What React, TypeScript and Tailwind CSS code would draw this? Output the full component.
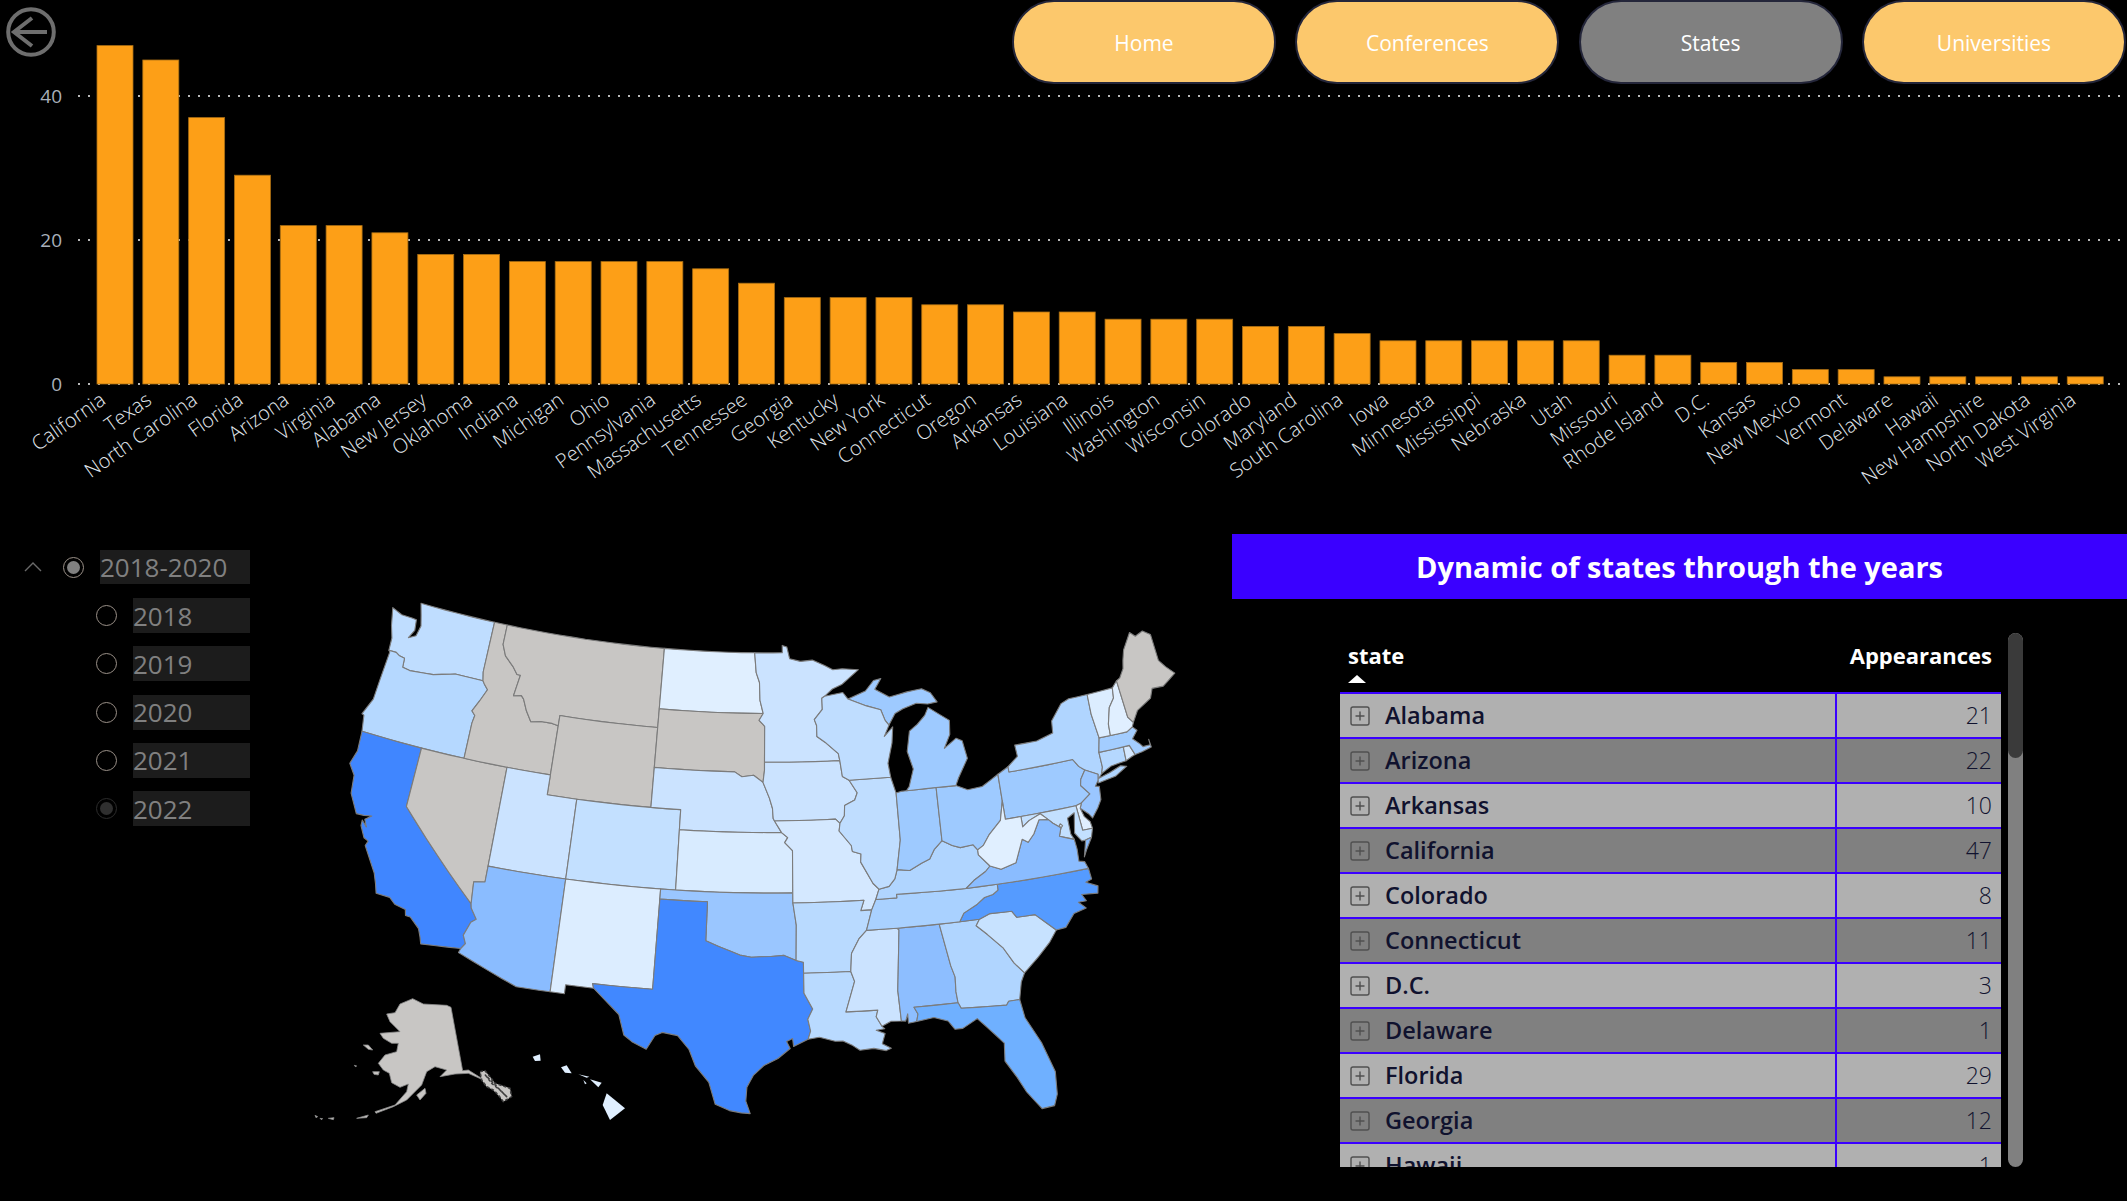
import { SquarePlus } from "lucide-react";

const barData: [string, number][] = [
  ["California", 47], ["Texas", 45], ["North Carolina", 37], ["Florida", 29], ["Arizona", 22], ["Virginia", 22],
  ["Alabama", 21], ["New Jersey", 18], ["Oklahoma", 18], ["Indiana", 17], ["Michigan", 17], ["Ohio", 17],
  ["Pennsylvania", 17], ["Massachusetts", 16], ["Tennessee", 14], ["Georgia", 12], ["Kentucky", 12], ["New York", 12],
  ["Connecticut", 11], ["Oregon", 11], ["Arkansas", 10], ["Louisiana", 10], ["Illinois", 9], ["Washington", 9],
  ["Wisconsin", 9], ["Colorado", 8], ["Maryland", 8], ["South Carolina", 7], ["Iowa", 6], ["Minnesota", 6],
  ["Mississippi", 6], ["Nebraska", 6], ["Utah", 6], ["Missouri", 4], ["Rhode Island", 4], ["D.C.", 3],
  ["Kansas", 3], ["New Mexico", 2], ["Vermont", 2], ["Delaware", 1], ["Hawaii", 1], ["New Hampshire", 1],
  ["North Dakota", 1], ["West Virginia", 1],
];

const rows: [string, number][] = [
  ["Alabama", 21], ["Arizona", 22], ["Arkansas", 10], ["California", 47], ["Colorado", 8], ["Connecticut", 11],
  ["D.C.", 3], ["Delaware", 1], ["Florida", 29], ["Georgia", 12], ["Hawaii", 1],
];

const navItems = ["Home", "Conferences", "States", "Universities"];
const years = ["2018", "2019", "2020", "2021", "2022"];

const GRAY = "#c8c6c4";
const shade: Record<number, string> = {
  47: "#4086ff", 45: "#4188ff", 37: "#559bff", 29: "#6fb0ff", 22: "#8abcff", 21: "#8dbeff", 18: "#9ac6ff", 17: "#9ecaff",
  16: "#a3cdff", 14: "#a9d1ff", 12: "#b0d5ff", 11: "#b5d8ff", 10: "#b9daff", 9: "#bfddff", 8: "#c3e0ff", 7: "#c7e2ff",
  6: "#cbe3ff", 4: "#d4e8ff", 3: "#d8ebff", 2: "#dcedff", 1: "#e0efff",
};

// lon/lat outlines, flat pairs
const states: [number, number[]][] = [
  [9, [-124.7,48.38,-123.9,48.17,-123.1,48.15,-122.75,48.13,-122.65,47.6,-122.95,47.15,-122.45,47.35,-122.3,47.9,-122.5,48.4,-122.76,49,-117.03,49,-117.04,46.42,-116.92,45.99,-118.98,46,-119.3,45.93,-120.5,45.7,-121.2,45.65,-122.2,45.58,-122.75,45.65,-122.8,46.1,-123.2,46.15,-123.5,46.27,-124.05,46.27,-124.1,46.9,-124.4,47.5]],
  [11, [-124.05,46.27,-123.5,46.27,-123.2,46.15,-122.8,46.1,-122.75,45.65,-122.2,45.58,-121.2,45.65,-120.5,45.7,-119.3,45.93,-118.98,46,-116.92,45.99,-116.78,45.85,-116.46,45.6,-116.85,44.95,-117.22,44.4,-116.95,44.2,-117.03,43.8,-117.03,42,-124.2,42,-124.4,42.8,-124.55,42.84,-124.1,43.7,-124.05,44.7,-123.95,46.2]],
  [47, [-124.2,42,-120,42,-120,39,-114.63,35,-114.57,34.8,-114.14,34.3,-114.43,34.1,-114.72,33.4,-114.5,33,-114.72,32.72,-117.12,32.53,-117.25,32.85,-117.45,33.25,-118.1,33.72,-118.4,33.74,-118.5,34.03,-119.2,34.15,-119.6,34.42,-120.47,34.45,-120.65,34.9,-120.9,35.4,-121.9,36.6,-121.8,36.85,-122.1,36.95,-122.5,37.5,-122.52,37.78,-122.15,37.5,-122.38,37.85,-122,38.1,-122.5,38.02,-123,38,-123.7,38.9,-123.85,39.8,-124.35,40.3,-124.1,41]],
  [0, [-120,42,-114.04,42,-114.04,36.2,-114.74,36.1,-114.63,35,-120,39]],
  [0, [-117.03,49,-116.05,49,-116.05,48,-115.7,47.45,-115,47,-114.6,46.65,-114.35,46.65,-114.45,46.1,-114.55,45.57,-114,45.65,-113.8,45.5,-113.45,44.95,-113,44.45,-112.3,44.55,-111.5,44.55,-111.05,44.48,-111.05,42,-117.03,42,-117.03,43.8,-116.95,44.2,-117.22,44.4,-116.85,44.95,-116.46,45.6,-116.78,45.85,-116.92,45.99,-117.04,46.42]],
  [0, [-116.05,49,-104.05,49,-104.05,45,-111.05,45,-111.05,44.48,-111.5,44.55,-112.3,44.55,-113,44.45,-113.45,44.95,-113.8,45.5,-114,45.65,-114.55,45.57,-114.45,46.1,-114.35,46.65,-114.6,46.65,-115,47,-115.7,47.45,-116.05,48]],
  [0, [-111.05,45,-104.05,45,-104.05,41,-111.05,41]],
  [6, [-114.04,42,-111.05,42,-111.05,41,-109.05,41,-109.05,37,-114.04,37]],
  [8, [-109.05,41,-102.05,41,-102.05,37,-109.05,37]],
  [22, [-114.04,37,-109.05,37,-109.05,31.33,-111.07,31.33,-114.8,32.5,-114.72,32.72,-114.5,33,-114.72,33.4,-114.43,34.1,-114.14,34.3,-114.57,34.8,-114.63,35,-114.74,36.1,-114.04,36.2]],
  [2, [-109.05,37,-103,37,-103.04,32,-106.62,32,-106.53,31.78,-108.2,31.78,-108.2,31.33,-109.05,31.33]],
  [1, [-104.05,49,-97.23,49,-97.1,48,-96.85,47.5,-96.8,46.6,-96.56,45.94,-104.05,45.94]],
  [0, [-104.05,45.94,-96.56,45.94,-96.85,45.6,-96.45,45.3,-96.45,43.5,-96.45,43.1,-96.55,42.5,-97.2,42.85,-98,42.77,-98.5,43,-104.05,43]],
  [6, [-104.05,43,-98.5,43,-98,42.77,-97.2,42.85,-96.55,42.5,-96.1,41.7,-95.9,41.2,-95.85,40.7,-95.3,40,-102.05,40,-102.05,41,-104.05,41]],
  [3, [-102.05,40,-95.3,40,-94.9,39.75,-95.1,39.5,-94.6,39.1,-94.62,37,-102.05,37]],
  [18, [-103,37,-94.62,37,-94.62,36.5,-94.43,35.4,-94.48,33.64,-95.2,33.9,-96,33.85,-96.6,33.83,-97.2,33.8,-97.9,33.9,-98.5,34.1,-99.2,34.3,-100,34.56,-100,36.5,-103,36.5]],
  [45, [-103,36.5,-100,36.5,-100,34.56,-99.2,34.3,-98.5,34.1,-97.9,33.9,-97.2,33.8,-96.6,33.83,-96,33.85,-95.2,33.9,-94.48,33.64,-94.04,33.55,-94.04,33,-94.04,32,-93.55,31.2,-93.85,30.7,-93.7,30.1,-93.85,29.7,-94.7,29.35,-94.75,29.75,-95.1,29.6,-94.9,29.25,-95.6,28.75,-96.4,28.4,-97,27.9,-97.35,27.3,-97.4,26.6,-97.15,25.97,-97.65,26,-98.3,26.1,-99.1,26.4,-99.5,27.5,-100.3,28.3,-100.7,29.1,-101.4,29.77,-102.3,29.88,-102.7,29.7,-103.15,28.98,-104,29.3,-104.5,29.6,-104.9,30.6,-106,31.4,-106.53,31.78,-106.62,32,-103.04,32]],
  [6, [-97.23,49,-95.15,49,-95.15,49.38,-94.8,49.3,-94.6,48.7,-93.8,48.55,-92.9,48.6,-92,48.3,-91.4,48.07,-90.7,48.1,-89.5,48,-90.8,47.3,-91.5,47.1,-92.1,46.75,-92.3,46.66,-92.3,46.1,-92.9,45.6,-92.75,45.3,-92.75,44.75,-92.2,44.45,-91.3,43.85,-91.22,43.5,-96.45,43.5,-96.45,45.3,-96.85,45.6,-96.56,45.94,-96.8,46.6,-96.85,47.5,-97.1,48]],
  [6, [-96.45,43.5,-91.22,43.5,-91.1,42.7,-90.65,42.5,-90.15,41.85,-90.35,41.5,-91.05,41.25,-91.1,40.75,-91.42,40.38,-91.7,40.6,-95.77,40.58,-95.85,40.7,-95.9,41.2,-96.1,41.7,-96.55,42.5,-96.45,43.1]],
  [4, [-95.77,40.58,-91.7,40.6,-91.42,40.38,-91.5,40,-90.75,39.25,-90.7,38.95,-90.15,38.8,-90.2,38.4,-89.5,37.3,-89.15,37,-89.4,36.5,-89.7,36,-90.38,36,-90.15,36.5,-94.62,36.5,-94.62,37,-94.6,39.1,-95.1,39.5,-94.9,39.75,-95.3,40]],
  [10, [-94.62,36.5,-90.15,36.5,-90.38,36,-89.7,36,-90.1,35,-90.6,34.6,-91.1,33.9,-91.2,33,-94.04,33,-94.04,33.55,-94.48,33.64,-94.43,35.4]],
  [10, [-94.04,33,-91.2,33,-91,32.5,-91.6,31,-89.73,31,-89.85,30.67,-89.55,30.18,-89.4,30.05,-89.9,30,-89.4,29.8,-89.6,29.3,-89.1,29.05,-89.4,28.95,-90.1,29.1,-90.9,29.05,-91.3,29.3,-91.85,29.55,-92.3,29.55,-93.2,29.78,-93.85,29.7,-93.7,30.1,-93.85,30.7,-93.55,31.2,-94.04,32]],
  [6, [-90.1,35,-88.2,35,-88.1,34.9,-88.47,31.9,-88.4,30.37,-89,30.4,-89.55,30.18,-89.85,30.67,-89.73,31,-91.6,31,-91,32.5,-91.2,33,-91.1,33.9,-90.6,34.6]],
  [21, [-88.2,35,-85.6,35,-85.18,32.87,-85,32.3,-85.05,31.55,-85,31,-87.6,31,-87.4,30.65,-87.52,30.28,-88,30.23,-88,30.7,-88.15,30.35,-88.4,30.37,-88.47,31.9,-88.1,34.9]],
  [12, [-85.6,35,-83.1,35,-83.35,34.7,-82.75,34.2,-81.9,33.4,-81.4,32.6,-80.87,32.03,-81.15,31.6,-81.4,30.75,-82.05,30.75,-82.2,30.57,-84.86,30.71,-85,31,-85.05,31.55,-85,32.3,-85.18,32.87]],
  [29, [-87.6,31,-85,31,-84.86,30.71,-82.2,30.57,-82.05,30.75,-81.4,30.75,-81.25,29.8,-80.55,28.45,-80.05,26.9,-80.15,25.75,-80.4,25.2,-81.1,25.15,-81.8,26.1,-82.2,26.9,-82.75,27.8,-82.65,28.7,-83.4,29.5,-84,30.1,-84.9,29.7,-85.35,29.7,-85.7,30.15,-86.5,30.4,-87.52,30.28,-87.4,30.65]],
  [7, [-83.35,34.7,-83.1,35,-82.4,35.2,-81.05,35.15,-80.8,34.82,-79.67,34.8,-78.55,33.86,-79.1,33.3,-79.9,32.7,-80.87,32.03,-81.4,32.6,-81.9,33.4,-82.75,34.2]],
  [37, [-84.32,35,-83.1,35,-82.4,35.2,-81.05,35.15,-80.8,34.82,-79.67,34.8,-78.55,33.86,-77.95,33.9,-77.3,34.5,-76.5,34.65,-76.9,35,-76.4,35,-76.6,35.35,-75.6,35.25,-75.5,35.6,-76.2,35.9,-75.8,36,-75.85,36.55,-81.68,36.59,-81.7,36.3,-82.05,36.12,-82.6,36.03,-83.1,35.75,-84,35.4]],
  [14, [-90.1,35,-88.2,35,-85.6,35,-84.32,35,-84,35.4,-83.1,35.75,-82.6,36.03,-82.05,36.12,-81.7,36.3,-81.68,36.59,-83.67,36.6,-88.07,36.68,-88.07,36.5,-89.4,36.5,-89.7,36]],
  [12, [-89.4,36.5,-88.07,36.5,-88.07,36.68,-83.67,36.6,-83.1,36.95,-82.3,37.3,-81.97,37.54,-82.6,38.17,-82.6,38.42,-82.85,38.7,-83.7,38.65,-84.2,38.8,-84.82,39.1,-85.4,38.7,-85.75,38.27,-86.3,38.1,-87.1,37.8,-87.9,37.9,-88.1,37.45,-88.5,37.1,-89.15,37]],
  [9, [-90.65,42.5,-87.8,42.5,-87.55,41.75,-87.53,41.7,-87.53,39.35,-87.9,37.9,-88.1,37.45,-88.5,37.1,-89.15,37,-89.5,37.3,-90.2,38.4,-90.15,38.8,-90.7,38.95,-90.75,39.25,-91.5,40,-91.42,40.38,-91.1,40.75,-91.05,41.25,-90.35,41.5,-90.15,41.85]],
  [17, [-87.53,41.7,-87.2,41.75,-86.82,41.76,-84.8,41.76,-84.82,39.1,-85.4,38.7,-85.75,38.27,-86.3,38.1,-87.1,37.8,-87.9,37.9,-87.53,39.35]],
  [17, [-84.8,41.76,-83.45,41.73,-82.7,41.45,-81.7,41.5,-80.52,41.98,-80.52,40.64,-80.85,39.7,-81.7,39.1,-82.2,38.6,-82.6,38.42,-82.85,38.7,-83.7,38.65,-84.2,38.8,-84.82,39.1]],
  [17, [-86.82,41.76,-84.8,41.76,-83.45,41.73,-83.2,42.1,-82.42,43,-82.6,43.9,-83,44.07,-83.9,43.65,-83.4,44.3,-83.3,45,-84.7,45.78,-85,45.4,-85.6,45,-86.2,44.7,-86.5,43.7,-86.2,42.8,-86.6,41.95]],
  [17, [-90.4,46.55,-89.1,46.9,-88.45,47.4,-87.9,47.47,-88.4,46.95,-87.4,46.5,-86.1,46.67,-85,46.75,-84.4,46.5,-84,46,-84.7,45.95,-85.5,46.05,-86.5,45.85,-87.1,45.65,-87.6,45.1,-87.85,45.35,-88.1,45.9,-89.1,46.15]],
  [9, [-92.3,46.66,-92.1,46.75,-91.2,46.85,-90.75,46.9,-90.4,46.55,-89.1,46.15,-88.1,45.9,-87.85,45.35,-87.6,45.1,-88,44.55,-87.35,45,-87.5,44.2,-87.9,43.2,-87.8,42.5,-90.65,42.5,-91.1,42.7,-91.22,43.5,-91.3,43.85,-92.2,44.45,-92.75,44.75,-92.75,45.3,-92.9,45.6,-92.3,46.1]],
  [17, [-80.52,41.98,-79.76,42.27,-79.76,42,-75.35,42,-75.05,41.6,-74.7,41.36,-75.1,40.95,-75.2,40.65,-74.72,40.15,-75.4,39.8,-75.79,39.72,-80.52,39.72,-80.52,40.64]],
  [12, [-79.76,42.27,-79,42.7,-79.05,43.27,-77.5,43.27,-76.3,43.5,-76.2,44.1,-75.3,44.85,-74.7,45,-73.35,45,-73.4,44,-73.25,42.75,-73.5,42.05,-73.5,41.3,-73.65,41,-73.9,40.8,-73.1,40.95,-72.3,41.15,-71.9,41.05,-72.8,40.7,-74,40.58,-74,40.7,-73.9,41,-74.7,41.36,-75.05,41.6,-75.35,42,-79.76,42]],
  [18, [-74.7,41.36,-73.9,41,-74,40.7,-74.25,40.45,-74,40.4,-74.1,39.75,-74.4,39.4,-74.9,38.95,-75.1,39.2,-75.55,39.55,-75.4,39.8,-74.72,40.15,-75.2,40.65,-75.1,40.95]],
  [1, [-75.79,39.72,-75.4,39.8,-75.55,39.55,-75.4,39.1,-75.1,38.8,-75.05,38.45,-75.7,38.46]],
  [8, [-79.48,39.72,-75.79,39.72,-75.7,38.46,-75.05,38.45,-75.24,38.03,-75.65,37.95,-75.9,37.95,-76.25,38.4,-76,39.4,-76.5,39.2,-76.5,38.4,-76.35,38.1,-76.95,38.3,-77.25,38.4,-77.05,38.8,-77.5,39.1,-77.75,39.32,-78.2,39.68,-79,39.45,-79.48,39.2]],
  [22, [-83.67,36.6,-81.68,36.59,-75.85,36.55,-76,36.92,-76.35,37,-76.3,37.6,-76.35,38.1,-76.95,38.3,-77.25,38.4,-77.05,38.8,-77.5,39.1,-77.75,39.32,-78.35,39.4,-78.85,38.75,-79.3,38.4,-79.65,38.6,-80.3,37.5,-81.3,37.3,-81.97,37.54,-82.3,37.3,-83.1,36.95]],
  [22, [-75.24,38.03,-75.65,37.95,-75.95,37.15,-75.7,37.5]],
  [1, [-82.6,38.42,-82.6,38.17,-81.97,37.54,-81.3,37.3,-80.3,37.5,-79.65,38.6,-79.3,38.4,-78.85,38.75,-78.35,39.4,-77.75,39.32,-78.2,39.68,-79,39.45,-79.48,39.2,-79.48,39.72,-80.52,39.72,-80.52,40.64,-80.85,39.7,-81.7,39.1,-82.2,38.6]],
  [3, [-77.12,38.93,-77.04,39,-76.91,38.89,-77.04,38.79]],
  [11, [-73.5,42.05,-71.8,42.02,-71.85,41.32,-72.9,41.25,-73.65,41,-73.5,41.3]],
  [4, [-71.8,42.02,-71.38,42.02,-71.15,41.5,-71.4,41.45,-71.85,41.32]],
  [16, [-73.25,42.75,-71.3,42.7,-70.85,42.87,-70.6,42.65,-71.05,42.3,-70.65,41.95,-70.5,41.78,-70,41.78,-70,42.05,-69.97,41.65,-70.65,41.55,-71.15,41.5,-71.38,42.02,-71.8,42.02,-73.5,42.05]],
  [2, [-73.35,45,-71.5,45.01,-71.6,44.5,-72.05,44.1,-72.4,43.3,-72.46,42.73,-73.25,42.75,-73.4,44]],
  [1, [-71.5,45.01,-71.08,45.3,-70.98,43.4,-70.7,43.07,-70.85,42.87,-71.3,42.7,-72.46,42.73,-72.4,43.3,-72.05,44.1,-71.6,44.5]],
  [0, [-71.08,45.3,-70.8,45.4,-70.4,45.8,-70.25,46.2,-70,46.7,-69.23,47.46,-68.9,47.2,-68.3,47.35,-67.8,47.07,-67.8,45.7,-67.45,45.3,-66.95,44.85,-68,44.4,-68.8,44.45,-69.1,44,-70.2,43.6,-70.7,43.07,-70.98,43.4]],
];

// Alaska and Hawaii are insets, so these are read straight off the page
const inset = (pts: number[]) => {
  let d = "";
  for (let i = 0; i < pts.length; i += 2) d += `${i ? "L" : "M"}${300 + pts[i] / 3} ${880 + pts[i + 1] / 3}`;
  return d + "Z";
};

const alaska = [
  [338,356,370,372,440,376,453,382,488,572,505,570,540,592,575,625,600,650,590,625,550,600,505,580,465,582,420,590,440,570,405,560,380,575,365,615,320,660,280,680,228,700,225,695,285,675,320,635,325,612,300,622,275,608,268,580,250,570,235,550,255,525,290,515,295,490,275,490,250,475,240,460,300,455,285,440,270,425,260,402,285,398,300,372],
  [540,575,555,572,570,590,585,610,610,618,630,625,635,650,610,665,595,645,580,630,560,620,545,600],
  [350,645,375,625,378,640,360,660],
  [190,495,205,495,218,510,205,508],
  [218,575,238,575,235,585,222,583],
  [170,715,205,705,200,713],
  [85,715,102,713,100,719],
  [45,706,53,710,48,713],
  [60,715,68,716,64,719],
  [163,556,170,558,166,560],
];
const hawaii = [
  [920,640,975,685,930,720,908,675],
  [870,598,905,608,895,622],
  [835,583,868,590,860,593],
  [850,600,860,610,855,613],
  [783,562,800,556,815,580,795,578],
  [698,530,720,523,722,542,705,543],
];

// Albers, parallels 29.5 and 45.5, fitted to the page
const rad = Math.PI / 180;
const n = (Math.sin(29.5 * rad) + Math.sin(45.5 * rad)) / 2;
const C = Math.cos(29.5 * rad) ** 2 + 2 * n * Math.sin(29.5 * rad);
const rho0 = Math.sqrt(C - 2 * n * Math.sin(37.5 * rad)) / n;
const project = (lon: number, lat: number): [number, number] => {
  const rho = Math.sqrt(C - 2 * n * Math.sin(lat * rad)) / n;
  const th = n * (lon + 96) * rad;
  return [771 + 1143 * rho * Math.sin(th), 883 + 1143 * (rho * Math.cos(th) - rho0)];
};

function statePath(pts: number[]) {
  let d = "";
  const len = pts.length;
  for (let i = 0; i < len; i += 2) {
    const [a, b, c, e] = [pts[i], pts[i + 1], pts[(i + 2) % len], pts[(i + 3) % len]];
    const steps = Math.max(1, Math.ceil(Math.abs(c - a)));
    for (let s = 0; s < steps; s++) {
      const [x, y] = project(a + ((c - a) * s) / steps, b + ((e - b) * s) / steps);
      d += `${d ? "L" : "M"}${x.toFixed(1)} ${y.toFixed(1)}`;
    }
  }
  return d + "Z";
}

function BarChart() {
  const y = (v: number) => 384 - v * 7.2;
  return (
    <svg viewBox="0 0 2127 500" className="block h-[500px] w-[2127px]">
      {[0, 20, 40].map((v) => (
        <g key={v}>
          <line x1={78} x2={2127} y1={y(v)} y2={y(v)} stroke="#b8b8b8" strokeWidth={2} strokeDasharray="2 8" />
          <text x={62} y={y(v) + 7} textAnchor="end" fontSize={19} fill="#a8b0ba">{v}</text>
        </g>
      ))}
      {barData.map(([name, v], i) => {
        const x = 97 + i * 45.82;
        return (
          <g key={name}>
            <rect x={x} y={y(v)} width={36} height={v * 7.2} fill="#fd9f17" stroke="#a86e14" strokeWidth={0.8} />
            <text transform={`translate(${x + 10} 403) rotate(-35)`} textAnchor="end" fontSize={20} fontWeight={300} fill="#e2e8ee">{name}</text>
          </g>
        );
      })}
    </svg>
  );
}

function BackButton() {
  return (
    <svg viewBox="0 0 50 50" className="absolute left-[6px] top-[7px] h-[50px] w-[50px]" fill="none" stroke="#6e6e6e">
      <circle cx={25} cy={25} r={22.8} strokeWidth={4} />
      <path d="M26 11 8 25l18 14M8 25h33" strokeWidth={4} />
    </svg>
  );
}

function Radio({ state }: { state: "on" | "off" | "dim" }) {
  if (state === "off") return <span className="block h-[21px] w-[21px] rounded-full border border-[#9a9088]" />;
  return (
    <span className={`flex h-[21px] w-[21px] items-center justify-center rounded-full border ${state === "on" ? "border-[#9a9088]" : "border-[#2c2c2c]"}`}>
      <span className={`block h-[13px] w-[13px] rounded-full ${state === "on" ? "bg-[#808080]" : "bg-[#2f2f2f]"}`} />
    </span>
  );
}

function Slicer() {
  return (
    <div className="flex w-[250px] shrink-0 flex-col pt-[16px] text-[26px] leading-none text-[#808080]">
      <div className="flex h-[34px] items-center">
        <svg viewBox="0 0 18 10" className="ml-[24px] h-[10px] w-[18px]" fill="none" stroke="#6a6a6a" strokeWidth={1.4}>
          <path d="M1 9 9 1l8 8" />
        </svg>
        <span className="ml-[21px]"><Radio state="on" /></span>
        <span className="ml-[16px] flex h-[34px] w-[150px] items-center bg-[#1c1c1c]">2018-2020</span>
      </div>
      <div className="mt-[14px] flex flex-col gap-[13.25px]">
        {years.map((yr) => (
          <div key={yr} className="flex h-[35px] items-center pl-[96px]">
            <Radio state={yr === "2022" ? "dim" : "off"} />
            <span className="ml-[16px] flex h-[35px] w-[117px] items-center bg-[#1c1c1c]">{yr}</span>
          </div>
        ))}
      </div>
    </div>
  );
}

function UsMap() {
  return (
    <svg viewBox="250 534 982 667" className="block h-[667px] w-[982px] shrink-0">
      <g stroke="#7c7c7c" strokeWidth={1.1} strokeLinejoin="round">
        {states.map(([v, pts], i) => (
          <path key={i} d={statePath(pts)} fill={v === 0 ? GRAY : shade[v]} />
        ))}
        {alaska.map((pts, i) => (
          <path key={i} d={inset(pts)} fill={GRAY} stroke={i === 1 ? "#3c3c3c" : "#8a8a8a"} strokeWidth={i === 1 ? 1.6 : 0.8} strokeDasharray={i === 1 ? "3 2" : undefined} />
        ))}
        <path d={inset([556,585,575,610,600,630,620,650])} fill="none" stroke="#3c3c3c" strokeWidth={1.6} strokeDasharray="3 2" />
      </g>
      {hawaii.map((pts, i) => (
        <path key={i} d={inset(pts)} fill="#e0efff" />
      ))}
    </svg>
  );
}

function StatesTable() {
  return (
    <div className="flex h-[534px] gap-[7px]">
      <div className="h-full w-[661px] overflow-hidden">
        <div className="relative h-[59px] text-[22px] font-bold text-white">
          <span className="absolute left-[8px] top-[6px]">state</span>
          <span className="absolute right-[9px] top-[6px]">Appearances</span>
          <svg viewBox="0 0 18 8" className="absolute left-[8px] top-[42px] h-[8px] w-[18px]" fill="#fff">
            <path d="M9 0 18 8H0Z" />
          </svg>
        </div>
        {rows.map(([name, v], i) => (
          <div
            key={name}
            className={`flex h-[45px] border-t-2 border-[#3a00ff] text-[#10122e] ${i % 2 === 0 ? "bg-[#b0b0b0]" : "bg-[#808080]"}`}
          >
            <div className="flex w-[495px] items-center pl-[8px]">
              <SquarePlus size={24} strokeWidth={1.4} className="text-[#505050]" />
              <span className="ml-[13px] text-[23.5px] font-semibold">{name}</span>
            </div>
            <div className="flex flex-1 items-center justify-end border-l-2 border-[#3a00ff] pr-[9px] text-[23px] font-light">{v}</div>
          </div>
        ))}
      </div>
      <div className="h-full w-[15px] overflow-hidden rounded-full bg-[#808080]">
        <div className="h-[125px] rounded-full bg-[#3a3a3a]" />
      </div>
    </div>
  );
}

export default function App() {
  return (
    <div className="h-[1201px] w-[2127px] overflow-hidden bg-black font-['Open_Sans',sans-serif]">
      <div className="relative h-[534px]">
        <BarChart />
        <BackButton />
        <nav className="absolute left-[1012px] top-0 flex gap-[19.33px]">
          {navItems.map((item) => (
            <button
              key={item}
              type="button"
              className={`h-[84px] w-[264px] rounded-[42px] border-2 border-[#24263a] pt-[3px] text-[21px] text-white ${item === "States" ? "bg-[#808080]" : "bg-[#fcc86c]"}`}
            >
              {item}
            </button>
          ))}
        </nav>
      </div>
      <div className="flex h-[667px]">
        <Slicer />
        <UsMap />
        <div className="w-[895px]">
          <div className="flex h-[65px] items-center justify-center bg-[#3a00ff] text-[29px] font-bold text-white">
            Dynamic of states through the years
          </div>
          <div className="ml-[108px] mt-[34px]">
            <StatesTable />
          </div>
        </div>
      </div>
    </div>
  );
}
